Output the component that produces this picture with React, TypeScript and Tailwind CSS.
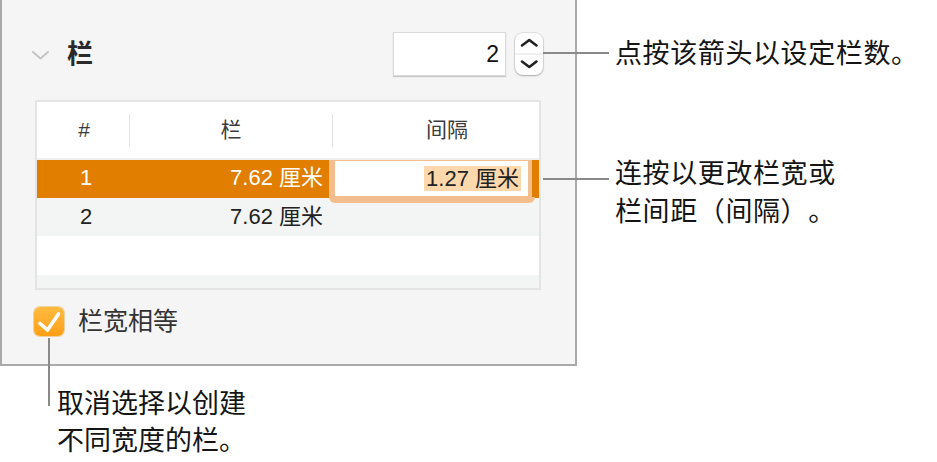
import React from 'react';

const font = "font-['Liberation_Sans','Noto_Sans_CJK_SC',sans-serif]";

function Chevron() {
  return (
    <svg width="17" height="9" viewBox="0 0 17 9" className="ml-[-3px] mt-[2px]">
      <path d="M1 1 L8.5 7.5 L16 1" fill="none" stroke="#c4c4c4" strokeWidth="2" strokeLinecap="round" strokeLinejoin="round" />
    </svg>
  );
}

function Stepper() {
  return (
    <div className="w-[28px] h-[42px] rounded-[8px] bg-white shadow-[0_0_0_1px_rgba(0,0,0,0.08),0_1px_2px_rgba(0,0,0,0.25)] flex flex-col">
      <svg width="28" height="42" viewBox="0 0 28 42">
        <line x1="0" y1="21" x2="28" y2="21" stroke="#e2e2e2" strokeWidth="1" />
        <path d="M7 12.5 L14.3 7 L21.5 12.5" fill="none" stroke="#222" strokeWidth="2.6" strokeLinecap="round" strokeLinejoin="round" />
        <path d="M7 28.5 L14.3 34 L21.5 28.5" fill="none" stroke="#222" strokeWidth="2.6" strokeLinecap="round" strokeLinejoin="round" />
      </svg>
    </div>
  );
}

function Checkbox() {
  return (
    <div className="ml-[-1px] w-[30px] h-[29px] rounded-[6px] bg-gradient-to-b from-[#ffbb3f] to-[#fd9f12] shadow-[0_0_0_1px_rgba(230,140,0,0.35)] flex items-center justify-center">
      <svg width="30" height="29" viewBox="0 0 30 29">
        <path d="M6 16.5 L13.5 23 L24.5 7" fill="none" stroke="#fff" strokeWidth="3.6" strokeLinecap="round" strokeLinejoin="round" />
      </svg>
    </div>
  );
}

export default function App() {
  return (
    <div className={`relative w-[937px] h-[462px] bg-white flex ${font}`}>
      <div className="w-[577px] flex flex-col">
        <div className="h-[366px] border-2 border-t-0 border-[#a9a9a9] bg-[#f5f5f5] pl-[33px] pr-[32px] flex flex-col">
          <div className="mt-[32px] h-[44px] flex items-center">
            <Chevron />
            <span className="ml-[18px] text-[26px] font-semibold text-[#2a2a2a] leading-none">栏</span>
            <div className="flex-1" />
            <div className="w-[113px] h-[44px] bg-white border border-[#dadada] shadow-[0_1px_1px_rgba(0,0,0,0.18)] flex items-center justify-end pr-[6px] text-[23px] text-[#111]">
              2
            </div>
            <div className="ml-[9px]">
              <Stepper />
            </div>
          </div>

          <div className="mt-[24px] w-[506px] border-2 border-[#e4e4e4] bg-white">
            <div className="h-[58px] flex items-center text-[21px] text-[#3c3c3c] border-b-2 border-[#efefef]">
              <div className="w-[92px] flex justify-center pl-[2px]">#</div>
              <div className="w-px h-[33px] bg-[#e3e3e3]" />
              <div className="w-[202px] flex justify-center">栏</div>
              <div className="w-px h-[33px] bg-[#e3e3e3]" />
              <div className="flex-1 flex justify-center pl-[22px]">间隔</div>
            </div>

            <div className="relative h-[38px] bg-[#e17e00] flex items-center text-[22px] text-white">
              <div className="w-[92px] flex justify-center pl-[6px] pb-[3px]">1</div>
              <div className="w-[203px] flex justify-end pr-[9px] pb-[3px]">7.62 厘米</div>
              <div className="absolute left-[292px] top-0 w-[206px] h-[43px] rounded-b-[6px] bg-[#f3be8b] z-10">
                <div className="ml-[6px] mt-[1px] w-[193px] h-[35px] bg-white flex items-center justify-end pr-[7px]">
                  <span className="bg-[#fdd8ad] text-[#222] h-[25px] flex items-center px-[2px] pb-[1px]">1.27 厘米</span>
                </div>
              </div>
              <div className="absolute left-[495px] top-0 w-[7px] h-[37px] bg-[#e17e00] z-20" />
            </div>

            <div className="h-[38px] bg-[#f3f4f4] flex items-center text-[22px] text-[#222]">
              <div className="w-[92px] flex justify-center pl-[6px] pb-[2px]">2</div>
              <div className="w-[203px] flex justify-end pr-[9px] pb-[2px]">7.62 厘米</div>
            </div>
            <div className="h-[39px] bg-white" />
            <div className="h-[13px] bg-[#f3f4f4]" />
          </div>

          <div className="mt-[17px] flex items-center">
            <Checkbox />
            <span className="ml-[14px] text-[25px] text-[#333] leading-none">栏宽相等</span>
          </div>
        </div>

        <div className="pt-[20px] pl-[57px] text-[27px] leading-[37px] text-[#151515]">
          <div>取消选择以创建</div>
          <div>不同宽度的栏。</div>
        </div>
      </div>

      <div className="pl-[38px] pt-[35px] flex flex-col text-[27px] leading-[38px] tracking-[0.6px] text-[#151515] [text-spacing-trim:space-all]">
        <div>点按该箭头以设定栏数。</div>
        <div className="mt-[82px]">
          <div>连按以更改栏宽或</div>
          <div>栏间距（间隔）。</div>
        </div>
      </div>

      <div className="absolute left-[543px] top-[52px] w-[66px] h-[2px] bg-[#8a8a8a]" />
      <div className="absolute left-[543px] top-[178px] w-[66px] h-[2px] bg-[#8a8a8a]" />
      <div className="absolute left-[48px] top-[338px] w-[2px] h-[68px] bg-[#8a8a8a]" />
    </div>
  );
}
